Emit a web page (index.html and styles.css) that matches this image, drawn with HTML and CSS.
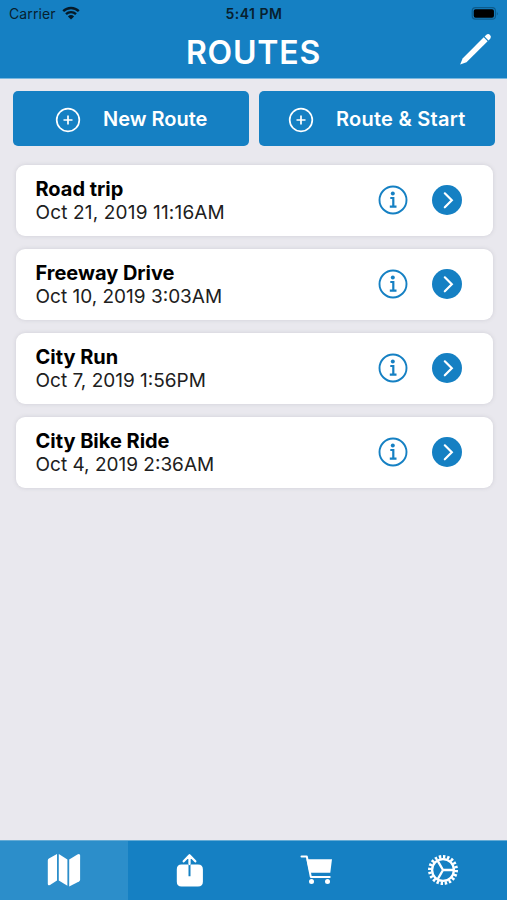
FILE: index.html
```html
<!DOCTYPE html>
<html lang="en">
<head>
<meta charset="utf-8">
<meta name="viewport" content="width=device-width">
<title>Routes</title>
<link rel="stylesheet" href="styles.css">
</head>
<body>
<svg class="defs" aria-hidden="true">
  <symbol id="plus" viewBox="0 0 26 26"><circle cx="13" cy="13" r="11.3"/><path d="M13 8.5v9M8.500 13h9"/></symbol>
  <symbol id="info" viewBox="0 0 30 30"><circle class="ring" cx="15" cy="15" r="13.500"/><circle class="dot" cx="14.800" cy="8.500" r="2"/><path class="ring stem" d="M12.300 13h3v8.500M11.800 21.700h6.700"/></symbol>
  <symbol id="go" viewBox="0 0 30 30"><circle class="disc" cx="15" cy="15" r="15"/><path class="arrow" d="M12.800 8.300l7 7-7 7"/></symbol>
</svg>
<div class="app">
  <header class="header">
    <div class="status">
      <div class="carrier"><span>Carrier</span>
        <svg class="wifi" viewBox="0 0 18 14"><path d="M1.200 5.100a11.200 11.200 0 0 1 15.600 0M4 8.100a7.200 7.200 0 0 1 10 0"/><path class="fan" d="M9 13.600L5.900 10.500a4.600 4.600 0 0 1 6.200 0z"/></svg>
      </div>
      <span class="time">5:41 PM</span>
      <svg class="battery" viewBox="0 0 30 14"><rect class="case" x=".7" y=".7" width="25" height="12.400" rx="3.500"/><rect x="2.300" y="2.300" width="21.800" height="9.200" rx="2"/><path class="nub" d="M27.200 4.800q2 2.200 0 4.400z"/></svg>
    </div>
    <div class="title-row">
      <h1>ROUTES</h1>
      <svg class="pencil" viewBox="0 0 34 34"><path d="M1.200 32.500L3.700 26.300 25.500 4.500l4 4L7.700 30.200z"/><path d="M26.400 3.600l1.800-1.800a2.850 2.850 0 0 1 4 4l-1.800 1.800z"/></svg>
    </div>
  </header>
  <main>
    <div class="actions">
      <button class="action new"><svg><use href="#plus"/></svg><span>New Route</span></button>
      <button class="action start"><svg><use href="#plus"/></svg><span>Route &amp; Start</span></button>
    </div>
    <section class="routes">
      <article class="card"><div class="label"><h2>Road trip</h2><p class="wide">Oct 21, 2019 11:16AM</p></div><svg class="info"><use href="#info"/></svg><svg class="go"><use href="#go"/></svg></article>
      <article class="card"><div class="label"><h2>Freeway Drive</h2><p>Oct 10, 2019 3:03AM</p></div><svg class="info"><use href="#info"/></svg><svg class="go"><use href="#go"/></svg></article>
      <article class="card"><div class="label"><h2>City Run</h2><p>Oct 7, 2019 1:56PM</p></div><svg class="info"><use href="#info"/></svg><svg class="go"><use href="#go"/></svg></article>
      <article class="card"><div class="label"><h2>City Bike Ride</h2><p>Oct 4, 2019 2:36AM</p></div><svg class="info"><use href="#info"/></svg><svg class="go"><use href="#go"/></svg></article>
    </section>
  </main>
  <nav class="tabs">
    <div class="tab active"><svg viewBox="0 0 36 36"><path d="M1.800 8.500q0-1.300 1.100-1.900L11 2v26.500L4 32.900q-2.200 1.100-2.200-1z"/><path d="M12.800 2l8.600 5.600v26.200l-8.600-5.400z"/><path d="M23.200 7.500l8.200-5.100q2.700-1.200 2.700 1.200v23.800q0 1.400-1.100 2.100l-9.800 5z"/></svg></div>
    <div class="tab"><svg viewBox="0 0 36 36"><path d="M9.500 12.500h7v11.700h2V12.500h7.500q4.900 0 4.900 4.700v12.500q0 4.700-4.900 4.700H9.500q-4.700 0-4.700-4.700V17.200q0-4.700 4.700-4.700z"/><path class="line" d="M17.500 12V3.500M11.700 9.300l5.800-6 5.800 6"/></svg></div>
    <div class="tab"><svg viewBox="0 0 36 36"><path d="M7.500 7.200h25.500L31.300 20.700H10.500z"/><path class="line thin" d="M2.500 4.500h5.300l4 20.400h18.900"/><circle cx="12.500" cy="29.500" r="2.500"/><circle cx="28.500" cy="29.500" r="2.500"/></svg></div>
    <div class="tab"><svg viewBox="0 0 36 36"><circle class="teeth" cx="18" cy="18" r="13.300" pathLength="40"/><circle class="wheel" cx="18" cy="18" r="10.900"/><path class="wheel" d="M18 18h10.500M18 18l-5.250-9.100M18 18l-5.250 9.100"/></svg></div>
  </nav>
</div>
</body>
</html>
```
FILE: styles.css
```css
* { box-sizing: border-box; }
body { margin: 0; font-family: Inter, "Liberation Sans", sans-serif; background: #e9e8ee; }
h1, h2, p { margin: 0; }
svg { display: block; flex: none; }
.defs { display: none; }
.app { width: 507px; height: 900px; display: flex; flex-direction: column; overflow: hidden; }
.header { height: 79px; flex: none; background: #1580c3; border-bottom: 1px solid #79b8df; }
.status { height: 27px; display: grid; grid-template-columns: 1fr auto 1fr; align-items: center; padding: 0 7px 0 9px; color: #07202f; font-size: 14px; }
.carrier { display: flex; align-items: center; gap: 6px; letter-spacing: .1px; }
.wifi { width: 18px; height: 14px; margin-top: -1px; fill: none; stroke: #061a28; stroke-width: 2.400; }
.wifi .fan { fill: #061a28; stroke: none; }
.time { font-weight: 600; font-size: 14px; letter-spacing: .5px; margin-right: 1px; }
.battery { width: 29px; height: 13px; justify-self: end; margin-top: -1px; }
.battery .case { fill: none; stroke: #0c5b8c; stroke-width: 1.200; }
.battery .nub { fill: #0c5b8c; }
.title-row { height: 51px; display: grid; grid-template-columns: 1fr auto 1fr; align-items: center; padding: 0 15px; color: #fff; }
.title-row h1 { grid-column: 2; font-size: 32px; line-height: 50px; font-weight: 600; letter-spacing: .8px; }
.pencil { width: 33px; height: 33px; justify-self: end; fill: #fff; margin-top: -6px; }
main { flex: 1; padding: 12px 12px 0 13px; }
.actions { display: flex; gap: 10px; }
.action { width: 236px; height: 55px; border: 0; border-radius: 5px; background: #1580c3; color: #fff; font: 600 20px Inter, "Liberation Sans", sans-serif; display: flex; align-items: center; padding: 0 0 0 42px; text-align: left; white-space: nowrap; }
.action.start { padding-left: 29px; letter-spacing: .25px; }
.action svg { width: 26px; height: 26px; fill: none; stroke: #fff; stroke-width: 1.700; margin: 2px 22px 0 0; }
.routes { margin: 18.500px 2.500px 0; display: flex; flex-direction: column; gap: 12.500px; }
.card { height: 71.500px; display: flex; align-items: center; background: #fff; border-radius: 9px; box-shadow: 0 0 4px #cfced5; padding: 0 30.500px 0 20px; }
.label { flex: 1; padding-top: 1px; color: #000; white-space: nowrap; }
.label h2 { font-size: 20px; line-height: 24px; font-weight: 700; letter-spacing: -.02px; }
.label p { font-size: 19px; line-height: 24px; color: #202020; }
.label .wide { letter-spacing: .16px; }
.info, .go { width: 30px; height: 30px; margin-top: -1px; }
.info { margin-right: 24px; }
.ring { fill: none; stroke: #1580c3; stroke-width: 1.900; }
.stem { stroke-width: 2.200; }
.dot, .disc { fill: #1580c3; }
.arrow { fill: none; stroke: #fff; stroke-width: 2.200; stroke-linecap: round; }
.tabs { height: 60px; flex: none; display: grid; grid-template-columns: 128px 124px 130px 125px; background: #1580c3; border-top: 1px solid #65abd5; }
.tab { display: flex; align-items: center; justify-content: center; }
.tab.active { background: #2c8eca; }
.tab svg { width: 36px; height: 36px; margin-top: -1px; fill: #fff; }
.tab:last-child svg { margin-right: 4px; }
.line { fill: none; stroke: #fff; stroke-width: 2.300; stroke-linecap: round; stroke-linejoin: round; }
.thin { stroke-width: 2; }
.teeth { fill: none; stroke: #fff; stroke-width: 3.400; stroke-dasharray: 1.150 .85; }
.wheel { fill: none; stroke: #fff; stroke-width: 2.300; }
```
